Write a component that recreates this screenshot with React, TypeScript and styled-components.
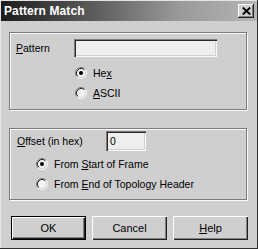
import React from "react";
import styled, { createGlobalStyle } from "styled-components";

const Global = createGlobalStyle`
  html, body { margin: 0; padding: 0; background: #cfcfcf; }
  body { font-family: "Liberation Sans", Arial, sans-serif; font-size: 10.5px; color: #000; }
`;

const Window = styled.div`
  width: 258px;
  height: 249px;
  box-sizing: border-box;
  padding: 1px;
  background: #cfcfcf;
  box-shadow: inset -1px -1px #303030, inset 1px 1px #e4e4e4;
  display: flex;
  flex-direction: column;
`;

const TitleBar = styled.div`
  height: 20px;
  display: flex;
  align-items: center;
  justify-content: space-between;
  padding: 0 3px 0 3px;
  background: linear-gradient(to right, #1c1c1c 0%, #5a5a5a 35%, #9a9a9a 70%, #b4b4b4 100%);
`;

const Title = styled.span`
  color: #fff;
  font-weight: bold;
  font-size: 12px;
  letter-spacing: 0.1px;
`;

const CloseBtn = styled.div`
  width: 16px;
  height: 14px;
  box-sizing: border-box;
  background: #cfcfcf;
  box-shadow: inset -1px -1px #202020, inset 1px 1px #fff, inset -2px -2px #808080;
  display: flex;
  align-items: center;
  justify-content: center;
  padding-bottom: 1px;
`;

const Body = styled.div`
  display: flex;
  flex-direction: column;
  padding: 10px 9px 0 8px;
`;

const Group = styled.div<{ $mt?: number }>`
  width: 238px;
  box-sizing: border-box;
  border: 1px solid #7c7c7c;
  box-shadow: inset 1px 1px #fafafa, 1px 1px #fafafa;
  margin-top: ${(p) => p.$mt ?? 0}px;
  display: flex;
  flex-direction: column;
`;

const Group1 = styled(Group)`
  padding: 6px 0 5px 6px;
  height: 78px;
`;

const Group2 = styled(Group)`
  padding: 2px 0 4px 7px;
  height: 72px;
`;

const FieldRow = styled.div`
  display: flex;
  align-items: center;
`;

const Label = styled.span<{ $w: number }>`
  width: ${(p) => p.$w}px;
`;

const Input = styled.div<{ $w: number; $h: number }>`
  width: ${(p) => p.$w}px;
  height: ${(p) => p.$h}px;
  box-sizing: border-box;
  background: #eeeeee;
  box-shadow: inset 1px 1px #7a7a7a, inset 2px 2px #2a2a2a, inset -1px -1px #fafafa, inset -2px -2px #d0d0d0;
  padding: 3px 4px;
  line-height: 14px;
`;

const RadioRow = styled.div<{ $indent: number; $mt?: number }>`
  height: 20px;
  display: flex;
  align-items: center;
  gap: 6px;
  margin-left: ${(p) => p.$indent}px;
  margin-top: ${(p) => p.$mt ?? 0}px;
`;

const U = styled.span`
  text-decoration: underline;
  text-underline-offset: 1px;
`;

const ButtonRow = styled.div`
  display: flex;
  gap: 6px;
  margin-top: 16px;
  padding-left: 2px;
`;

const Button = styled.div<{ $default?: boolean }>`
  width: 75px;
  height: 24px;
  box-sizing: border-box;
  display: flex;
  align-items: center;
  justify-content: center;
  font-size: 11px;
  background: #cfcfcf;
  border: ${(p) => (p.$default ? "1px solid #000" : "none")};
  box-shadow: inset 1px 1px #fff, inset -1px -1px #202020, inset -2px -2px #808080;
`;

const Radio: React.FC<{ checked?: boolean }> = ({ checked }) => (
  <svg width="12" height="12" viewBox="0 0 12 12">
    <circle cx="6" cy="6" r="5" fill="#f4f4f4" />
    <path d="M2.11 9.89 A5.5 5.5 0 0 1 9.89 2.11" stroke="#7c7c7c" strokeWidth="1" fill="none" />
    <path d="M9.89 2.11 A5.5 5.5 0 0 1 2.11 9.89" stroke="#fafafa" strokeWidth="1" fill="none" />
    <path d="M2.82 9.18 A4.5 4.5 0 0 1 9.18 2.82" stroke="#202020" strokeWidth="1" fill="none" />
    <path d="M9.18 2.82 A4.5 4.5 0 0 1 2.82 9.18" stroke="#d0d0d0" strokeWidth="1" fill="none" />
    {checked && <circle cx="6" cy="6" r="2" fill="#000" />}
  </svg>
);

export default function App() {
  return (
    <>
      <Global />
      <Window>
        <TitleBar>
          <Title>Pattern Match</Title>
          <CloseBtn>
            <svg width="9" height="8" viewBox="0 0 9 8">
              <path d="M0.8 0.6 L8.2 7.4 M8.2 0.6 L0.8 7.4" stroke="#000" strokeWidth="2" />
            </svg>
          </CloseBtn>
        </TitleBar>
        <Body>
          <Group1 $mt={1}>
            <FieldRow>
              <Label $w={58}>
                <U>P</U>attern
              </Label>
              <Input $w={143} $h={18} />
            </FieldRow>
            <RadioRow $indent={59} $mt={6}>
              <Radio checked />
              <span>
                He<U>x</U>
              </span>
            </RadioRow>
            <RadioRow $indent={59}>
              <Radio />
              <span>
                <U>A</U>SCII
              </span>
            </RadioRow>
          </Group1>
          <Group2 $mt={18}>
            <FieldRow>
              <Label $w={89}>
                <U>O</U>ffset (in hex)
              </Label>
              <Input $w={40} $h={20}>0</Input>
            </FieldRow>
            <RadioRow $indent={19} $mt={3}>
              <Radio checked />
              <span>
                From <U>S</U>tart of Frame
              </span>
            </RadioRow>
            <RadioRow $indent={19}>
              <Radio />
              <span>
                From <U>E</U>nd of Topology Header
              </span>
            </RadioRow>
          </Group2>
          <ButtonRow>
            <Button $default>OK</Button>
            <Button>Cancel</Button>
            <Button>
              <span>
                <U>H</U>elp
              </span>
            </Button>
          </ButtonRow>
        </Body>
      </Window>
    </>
  );
}
